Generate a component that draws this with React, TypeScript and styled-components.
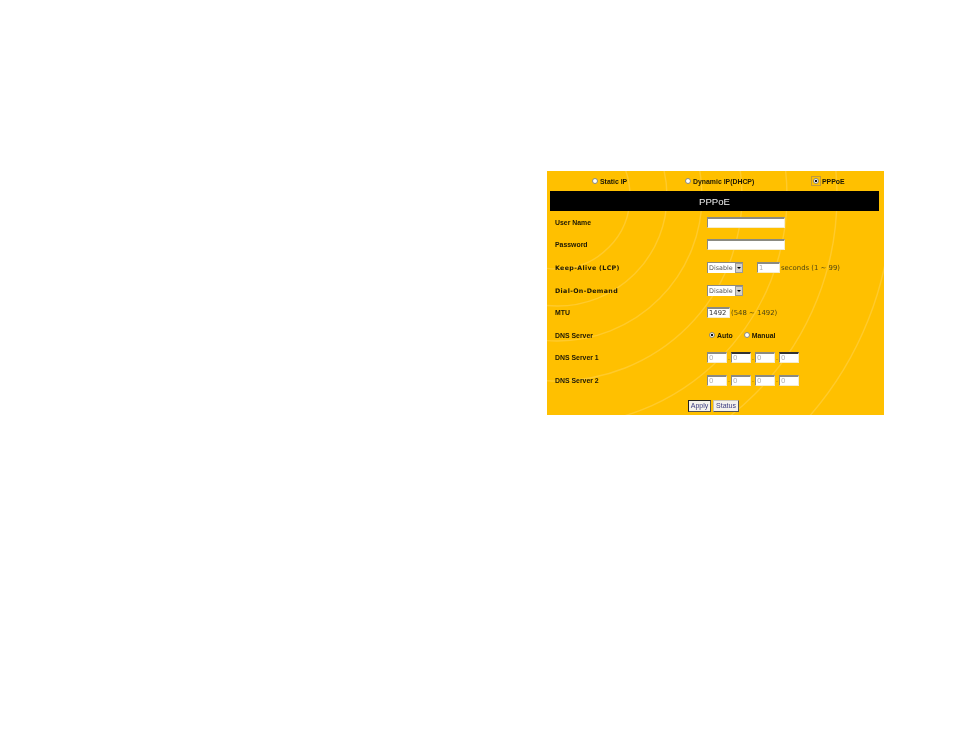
import { Fragment } from 'react';
import { createGlobalStyle, styled } from 'styled-components';

const ipFields = ['0', '0', '0', '0'];
const arcs = [73, 110, 145, 185, 230, 280, 335];

const App = () => {
  return (
    <>
      <GlobalStyle />
      <Panel>
        <Arcs viewBox="0 0 337 244" aria-hidden="true">
          {arcs.map(r => (
            <circle key={r} cx="10" cy="25" r={r} />
          ))}
        </Arcs>
        <ModeBar>
          <ModeOption>
            <Radio />
            Static IP
          </ModeOption>
          <ModeOption>
            <Radio />
            Dynamic IP(DHCP)
          </ModeOption>
          <ModeOption>
            <FocusBox>
              <Radio $checked />
            </FocusBox>
            PPPoE
          </ModeOption>
        </ModeBar>
        <TitleBar>PPPoE</TitleBar>
        <Form>
          <Row>
            <Label>User Name</Label>
            <Field>
              <TextBox $width={78} />
            </Field>
          </Row>
          <Row>
            <Label>Password</Label>
            <Field>
              <TextBox $width={78} />
            </Field>
          </Row>
          <Row>
            <WideLabel>Keep-Alive (LCP)</WideLabel>
            <Field>
              <Select>
                Disable
                <SelectArrow />
              </Select>
              <TextBox $width={23} $disabled $gap={14}>
                1
              </TextBox>
              <Hint>seconds (1 ~ 99)</Hint>
            </Field>
          </Row>
          <Row>
            <WideLabel>Dial-On-Demand</WideLabel>
            <Field>
              <Select>
                Disable
                <SelectArrow />
              </Select>
            </Field>
          </Row>
          <Row>
            <Label>MTU</Label>
            <Field>
              <TextBox $width={23}>1492</TextBox>
              <Hint>(548 ~ 1492)</Hint>
            </Field>
          </Row>
          <Row>
            <Label>DNS Server</Label>
            <Field>
              <RadioGroup>
                <Radio $checked />
                <RadioText>Auto</RadioText>
                <Radio />
                <RadioText>Manual</RadioText>
              </RadioGroup>
            </Field>
          </Row>
          <Row>
            <Label>DNS Server 1</Label>
            <Field>
              {ipFields.map((v, i) => (
                <Fragment key={i}>
                  {i > 0 && <IpDot>.</IpDot>}
                  <TextBox $width={20} $disabled $dark={i % 2 === 1}>
                    {v}
                  </TextBox>
                </Fragment>
              ))}
            </Field>
          </Row>
          <Row>
            <Label>DNS Server 2</Label>
            <Field>
              {ipFields.map((v, i) => (
                <Fragment key={i}>
                  {i > 0 && <IpDot>.</IpDot>}
                  <TextBox $width={20} $disabled>
                    {v}
                  </TextBox>
                </Fragment>
              ))}
            </Field>
          </Row>
        </Form>
        <Buttons>
          <Button $active $width={23}>
            Apply
          </Button>
          <Button $width={26}>Status</Button>
        </Buttons>
      </Panel>
    </>
  );
};

const GlobalStyle = createGlobalStyle`
  html, body {
    margin: 0;
    background: #fff;
  }
  #root {
    height: 738px;
    padding: 171px 0 0 547px;
    box-sizing: border-box;
    overflow: hidden;
  }
`;

const Panel = styled.div`
  position: relative;
  width: 337px;
  height: 244px;
  background-color: #ffc000;
  font-family: 'Liberation Sans', Arial, sans-serif;
  color: #1c1704;
  overflow: hidden;
  filter: blur(0.3px);
`;

const Arcs = styled.svg`
  position: absolute;
  inset: 0;
  width: 100%;
  height: 100%;
  fill: none;
  stroke: #ffca2c;
  stroke-width: 1.4;
`;

const ModeBar = styled.div`
  position: relative;
  height: 20px;
  display: grid;
  grid-template-columns: 93px 126px 1fr;
  padding-left: 45px;
  align-items: center;
`;

const ModeOption = styled.div`
  display: flex;
  align-items: center;
  gap: 2px;
  font-size: 6.9px;
  font-weight: 700;
  white-space: nowrap;
`;

const FocusBox = styled.span`
  display: flex;
  align-items: center;
  justify-content: center;
  width: 10px;
  height: 10px;
  margin-right: -1px;
  border: 1px solid #c29a3a;
  box-sizing: border-box;
`;

const Radio = styled.span<{ $checked?: boolean }>`
  display: inline-block;
  flex: none;
  width: 6px;
  height: 6px;
  border-radius: 50%;
  box-sizing: border-box;
  border: 1px solid #8a8a80;
  background: ${p => (p.$checked ? 'radial-gradient(circle, #111 0 1.3px, #fff 1.6px)' : '#fff')};
`;

const TitleBar = styled.div`
  position: relative;
  margin: 0 5px 0 3px;
  height: 20px;
  background: #000;
  color: #eeeeee;
  display: flex;
  align-items: center;
  justify-content: center;
  font-size: 9.6px;
`;

const Form = styled.div`
  position: relative;
  display: flex;
  flex-direction: column;
`;

const Row = styled.div`
  height: 22.6px;
  display: grid;
  grid-template-columns: 160px 1fr;
  align-items: center;
`;

const Label = styled.div`
  padding-left: 8px;
  font-size: 6.9px;
  font-weight: 700;
  white-space: nowrap;
`;

const WideLabel = styled(Label)`
  font-family: 'DejaVu Sans', Verdana, sans-serif;
  font-size: 6.3px;
  letter-spacing: 0.35px;
`;

const Field = styled.div`
  display: flex;
  align-items: center;
`;

const IpDot = styled.span`
  width: 4px;
  align-self: flex-end;
  text-align: center;
  font-size: 7px;
  line-height: 12px;
  color: #6a5a18;
`;

const TextBox = styled.div<{ $width: number; $disabled?: boolean; $gap?: number; $dark?: boolean }>`
  width: ${p => p.$width}px;
  height: 11px;
  margin-left: ${p => p.$gap ?? 0}px;
  box-sizing: border-box;
  background: #fff;
  border-top: 2px solid ${p => (p.$dark ? '#333' : '#8a8a82')};
  border-left: 1px solid #8a8a82;
  border-right: 1px solid #f4ecd0;
  border-bottom: 1px solid #f4ecd0;
  padding-left: 1px;
  font-family: 'DejaVu Sans', Verdana, sans-serif;
  font-size: 6.8px;
  line-height: 8px;
  color: ${p => (p.$disabled ? '#b0b0b0' : '#333')};
`;

const Select = styled.div`
  width: 36px;
  height: 11px;
  box-sizing: border-box;
  position: relative;
  background: #fff;
  border-top: 1px solid #8a8a82;
  border-left: 1px solid #8a8a82;
  padding-left: 1px;
  font-family: 'DejaVu Sans', Verdana, sans-serif;
  font-size: 6.4px;
  line-height: 10px;
  color: #555;
`;

const SelectArrow = styled.span`
  position: absolute;
  right: 0;
  top: 0;
  width: 8px;
  height: 10px;
  background: #d4d0c8;
  border: 1px solid #999;
  box-sizing: border-box;
  &::after {
    content: '';
    position: absolute;
    left: 1px;
    top: 3px;
    border-left: 2px solid transparent;
    border-right: 2px solid transparent;
    border-top: 2px solid #000;
  }
`;

const Hint = styled.span`
  margin: 1px 0 0 1px;
  font-family: 'DejaVu Sans', Verdana, sans-serif;
  font-size: 6.9px;
  color: #4f4512;
  white-space: nowrap;
`;

const RadioGroup = styled.div`
  display: flex;
  align-items: center;
  padding-left: 2px;
`;

const RadioText = styled.span`
  margin: 0 11px 0 2px;
  font-size: 6.9px;
  font-weight: 700;
`;

const Buttons = styled.div`
  position: relative;
  display: flex;
  gap: 2px;
  padding: 8px 0 0 141px;
`;

const Button = styled.div<{ $active?: boolean; $width: number }>`
  width: ${p => p.$width}px;
  height: 12px;
  box-sizing: border-box;
  display: flex;
  align-items: center;
  justify-content: center;
  background: #f4f2ec;
  border: 1px solid ${p => (p.$active ? '#222' : '#c8c4b8')};
  border-right-color: #555;
  border-bottom-color: #555;
  color: #3a3a80;
  font-size: 7px;
`;

export default App;
